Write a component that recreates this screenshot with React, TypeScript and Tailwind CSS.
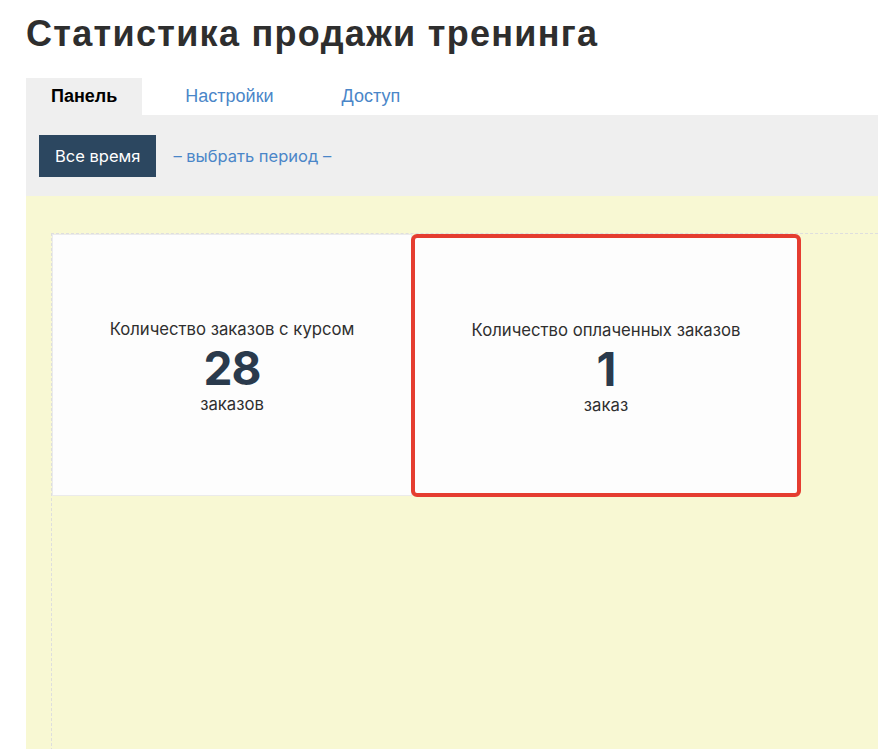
import React from 'react';

const tabs = ['Панель', 'Настройки', 'Доступ'];

interface StatCardProps {
  label: string;
  value: string;
  unit: string;
  highlighted?: boolean;
}

const StatCard: React.FC<StatCardProps> = ({ label, value, unit, highlighted }) => (
  <div
    className={
      highlighted
        ? '-ml-px flex h-[263px] w-[390px] flex-col items-center justify-center rounded-[6px] border-4 border-[#e53d30] bg-[#fdfdfd]'
        : 'flex h-[262px] w-[360px] flex-col items-center justify-center border border-[#ebebeb] bg-[#fdfdfd]'
    }
  >
    <div className="text-[16.7px] leading-[22px] text-[#2f2f2f]">{label}</div>
    <div className="text-[46px] font-bold leading-[56px] tracking-[-1px] text-[#2a3a4c]">{value}</div>
    <div className="text-[16.7px] leading-[16px] text-[#2f2f2f]">{unit}</div>
  </div>
);

export default function App() {
  const [active, setActive] = React.useState(0);

  return (
    <div className="min-h-screen w-full overflow-hidden bg-white font-['Liberation_Sans',Arial,sans-serif]">
      <h1 className="pl-[26px] pt-[12px] text-[36px] font-bold leading-[43px] tracking-[1.3px] text-[#2e2e2e]">
        Статистика продажи тренинга
      </h1>

      <div className="ml-[26px] mt-[23px]">
        {/* tabs */}
        <div className="flex h-[37px] gap-[18px]">
          {tabs.map((tab, i) => (
            <button
              key={tab}
              onClick={() => setActive(i)}
              className={
                i === active
                  ? 'flex h-full items-center bg-[#efefef] px-[25px] text-[18px] font-bold text-black'
                  : 'flex h-full items-center px-[25px] text-[18px] text-[#4a86c8]'
              }
            >
              {tab}
            </button>
          ))}
        </div>

        {/* period filter */}
        <div className="flex h-[81px] items-start gap-[17px] bg-[#efefef] pl-[13px] pt-[20px]">
          <button className="flex h-[42px] items-center bg-[#2c4760] px-[16px] font-['Inter',sans-serif] text-[16.5px] text-white">
            Все время
          </button>
          <a className="flex h-[42px] items-center font-['Inter',sans-serif] text-[16.5px] text-[#4a86c8]">
            – выбрать период –
          </a>
        </div>

        {/* stats area */}
        <div className="h-[560px] bg-[#f8f8d3] pl-[25px] pt-[37px]">
          <div className="h-full border-l border-t border-dashed border-[#dedede] font-['Inter',sans-serif]">
            <div className="flex items-start">
              <StatCard label="Количество заказов с курсом" value="28" unit="заказов" />
              <StatCard label="Количество оплаченных заказов" value="1" unit="заказ" highlighted />
            </div>
          </div>
        </div>
      </div>
    </div>
  );
}
